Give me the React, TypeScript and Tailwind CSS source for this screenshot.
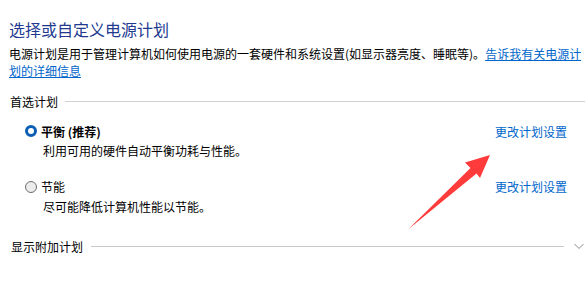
import React from "react";

const font = { fontFamily: '"Noto Sans CJK SC", "Noto Sans", sans-serif' };

/* Windows 10 style radio: filled ring when checked, grey disc otherwise */
const Radio = ({ checked }: { checked?: boolean }) =>
  checked ? (
    <span className="block w-[12px] h-[12px] rounded-full border-[3.5px] border-[#0a5fb4] bg-white" />
  ) : (
    <span className="block w-[12px] h-[12px] rounded-full border border-[#6e6e6e] bg-[#ececec]" />
  );

const Plan = ({
  name,
  desc,
  checked,
  bold,
}: {
  name: string;
  desc: string;
  checked?: boolean;
  bold?: boolean;
}) => (
  <div>
    <div className="flex items-center justify-between pl-[16px] pr-[18px] leading-[17px]">
      <div className="flex items-center gap-[4px]">
        <Radio checked={checked} />
        <span className={bold ? "font-bold text-black" : "text-black"}>{name}</span>
      </div>
      <a className="text-[#0066cc]">更改计划设置</a>
    </div>
    <div className="pl-[34px] mt-[2.5px] leading-[17px] text-black">{desc}</div>
  </div>
);

export default function App() {
  return (
    <div
      className="relative w-[585px] h-[283px] bg-white overflow-hidden pl-[9px] text-[12px]"
      style={font}
    >
      <div className="pt-[19px] text-[16px] leading-[20px] text-[#213a90]">
        选择或自定义电源计划
      </div>
      <p className="mt-[6px] leading-[17px] text-black">
        电源计划是用于管理计算机如何使用电源的一套硬件和系统设置(如显示器亮度、睡眠等)。<a className="text-[#0066cc] underline">告诉我有关电源计划的详细信息</a>
      </p>

      <div className="mt-[14px] flex items-center gap-[7px] leading-[17px] pl-[1px]">
        <span className="text-black">首选计划</span>
        <div className="flex-1 h-px bg-[#d0d0d0]" />
      </div>

      <div className="mt-[12.5px]">
        <Plan name="平衡 (推荐)" desc="利用可用的硬件自动平衡功耗与性能。" checked bold />
      </div>
      <div className="mt-[19px]">
        <Plan name="节能" desc="尽可能降低计算机性能以节能。" />
      </div>

      <div className="mt-[23px] flex items-center leading-[17px] pl-[2px] pr-[1px]">
        <span className="text-black">显示附加计划</span>
        <div className="ml-[8px] flex-1 h-px bg-[#c8c8c8]" />
        <svg className="ml-[10px]" width="10" height="7" viewBox="0 0 10 7">
          <path d="M0.5 1 L5 5.5 L9.5 1" fill="none" stroke="#8a8a8a" strokeWidth="1" />
        </svg>
      </div>

      {/* red annotation arrow over the page */}
      <svg
        className="absolute left-0 top-0 pointer-events-none"
        width="585"
        height="283"
        viewBox="0 0 585 283"
      >
        <polygon
          points="490,155 480,178 476.5,173.5 408,229.5 470.5,168 465,162.5"
          fill="#ff3b3b"
        />
      </svg>
    </div>
  );
}
